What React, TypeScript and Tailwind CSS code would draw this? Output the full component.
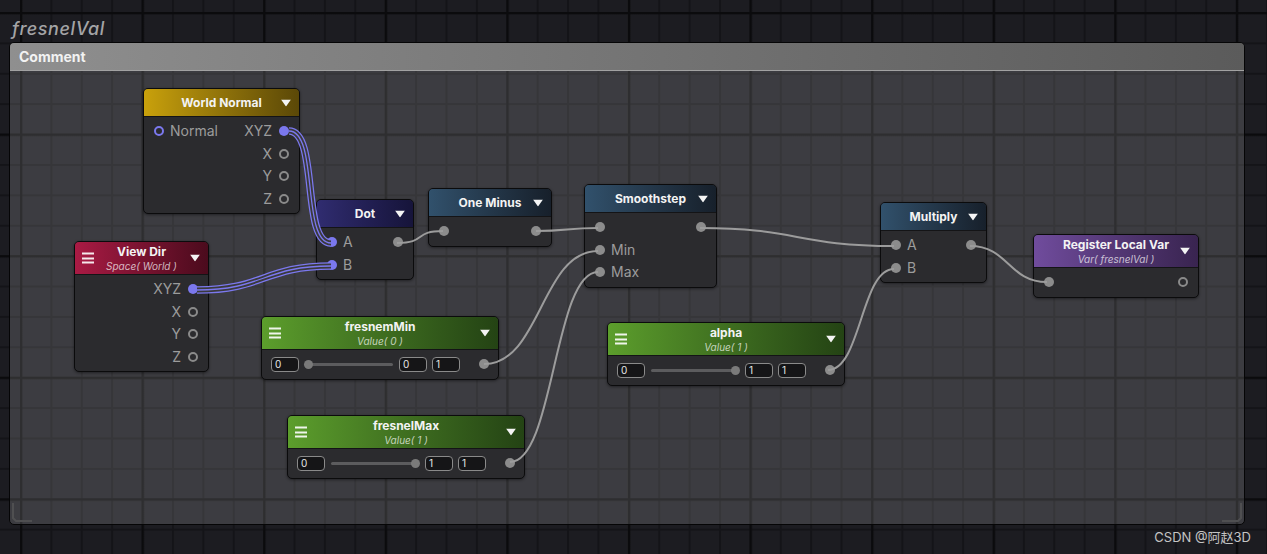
import type { ReactNode } from "react";

type PortKind = "grey" | "purple" | "greyRing" | "purpleRing";

const PURPLE = "#7b78ee";

function Port({ kind }: { kind: PortKind }) {
  if (kind === "purple") return <span className="block h-[10px] w-[10px] shrink-0 rounded-full bg-[#7b78ee]" />;
  if (kind === "purpleRing") return <span className="block h-[10px] w-[10px] shrink-0 rounded-full border-2 border-[#7b78ee]" />;
  if (kind === "greyRing") return <span className="block h-[10px] w-[10px] shrink-0 rounded-full border-2 border-[#8a8a8a]" />;
  return <span className="block h-[10px] w-[10px] shrink-0 rounded-full bg-[#8c8c8c]" />;
}

function Row({ left, leftLabel, rightLabel, right }: { left?: PortKind; leftLabel?: string; rightLabel?: string; right?: PortKind }) {
  return (
    <div className="flex h-[22.5px] items-center justify-between px-[10px] text-[14px] leading-none text-[#9c9c9c]">
      <div className="flex items-center gap-[6px]">
        {left ? <Port kind={left} /> : null}
        {leftLabel ? <span>{leftLabel}</span> : null}
      </div>
      <div className="flex items-center gap-[7px]">
        {rightLabel ? <span>{rightLabel}</span> : null}
        {right ? <Port kind={right} /> : null}
      </div>
    </div>
  );
}

function NumBox({ value }: { value: string }) {
  return (
    <div className="flex h-[15px] w-[28px] shrink-0 items-center rounded-[4px] border border-[#8a8a8a] bg-[#151517] pl-[3px] text-[10px] leading-none text-[#e6e6e6]">
      {value}
    </div>
  );
}

function ValueRow({ min, value, max, knobRight }: { min: string; value: string; max: string; knobRight?: boolean }) {
  return (
    <div className="flex h-[22.5px] items-center pl-[9px] pr-[9px]">
      <NumBox value={min} />
      <div className="relative mx-[6px] h-[3px] flex-1 rounded-full bg-[#5c5c5e]">
        <span className={`absolute top-[-3px] h-[9px] w-[9px] rounded-full bg-[#7a7a7a] ${knobRight ? "right-[-1px]" : "left-[-1px]"}`} />
      </div>
      <NumBox value={value} />
      <div className="w-[5px]" />
      <NumBox value={max} />
      <div className="ml-[19px]">
        <Port kind="grey" />
      </div>
    </div>
  );
}

function Hamburger() {
  return (
    <div className="absolute left-[7px] top-1/2 flex -translate-y-1/2 flex-col gap-[2.5px]">
      <span className="block h-[2px] w-[12px] bg-white/90" />
      <span className="block h-[2px] w-[12px] bg-white/90" />
      <span className="block h-[2px] w-[12px] bg-white/90" />
    </div>
  );
}

function Caret() {
  return (
    <svg className="absolute right-[8px] top-1/2 -translate-y-1/2" width="10" height="7" viewBox="0 0 10 7">
      <polygon points="0,0 10,0 5,7" fill="#f4f4f4" />
    </svg>
  );
}

function Node({
  pos,
  header,
  title,
  subtitle,
  menu,
  children,
}: {
  pos: string;
  header: string;
  title: string;
  subtitle?: string;
  menu?: boolean;
  children: ReactNode;
}) {
  return (
    <div className={`absolute overflow-hidden rounded-[5px] border border-[#0b0b0c] bg-[#2b2b2e] shadow-[0_1px_3px_rgba(0,0,0,0.45)] ${pos}`}>
      <div className={`relative flex flex-col items-center justify-center border-b border-[#141416] bg-linear-to-r ${subtitle ? "h-[33px]" : "h-[28px]"} ${header}`}>
        {menu ? <Hamburger /> : null}
        <span className="text-[12px] font-bold leading-[14px] text-[#f3f3f3]">{title}</span>
        {subtitle ? <span className="mt-[1px] text-[10px] italic leading-[12px] text-white/70">{subtitle}</span> : null}
        <Caret />
      </div>
      <div className="py-[3px]">{children}</div>
    </div>
  );
}

function curve(x1: number, y1: number, x2: number, y2: number) {
  const k = Math.max(Math.abs(x2 - x1) * 0.5, 30);
  return `M${x1} ${y1} C${x1 + k} ${y1} ${x2 - k} ${y2} ${x2} ${y2}`;
}

const greyWires: [number, number, number, number][] = [
  [397, 243, 443, 231],
  [536, 231, 598, 228],
  [484, 364, 598, 251],
  [510, 462, 598, 272],
  [700, 228, 894, 246],
  [828, 370, 894, 269],
  [970, 246, 1047, 282],
];

const purpleWires: [number, number, number, number][] = [
  [289, 131, 331, 243],
  [197, 290, 331, 266],
];

function Wires() {
  return (
    <svg className="pointer-events-none absolute left-0 top-0" width="1267" height="554" viewBox="0 0 1267 554">
      {greyWires.map(([a, b, c, d], i) => (
        <path key={i} d={curve(a, b, c, d)} fill="none" stroke="#9c9c9c" strokeWidth="2" />
      ))}
      {purpleWires.map(([a, b, c, d], i) => (
        <g key={i} fill="none">
          <path d={curve(a, b, c, d)} stroke={PURPLE} strokeWidth="7.5" />
          <path d={curve(a, b, c, d)} stroke="#3a3a3c" strokeWidth="5" />
          <path d={curve(a, b, c, d)} stroke={PURPLE} strokeWidth="1.3" />
        </g>
      ))}
    </svg>
  );
}

export default function App() {
  return (
    <div className="relative h-[554px] w-[1267px] overflow-hidden bg-[#1c1c21] bg-[image:linear-gradient(to_right,#0b0b0d_1.5px,transparent_3px),linear-gradient(to_bottom,#0b0b0d_1.5px,transparent_3px),linear-gradient(to_right,#141418_1.5px,transparent_2.5px),linear-gradient(to_bottom,#141418_1.5px,transparent_2.5px)] bg-[size:121.6px_121.6px,121.6px_121.6px,30.4px_30.4px,30.4px_30.4px] bg-[position:20px_12px] [font-family:Inter,'Noto_Sans',sans-serif]">
      <div className="absolute left-[12px] top-[18px] text-[18px] font-medium italic leading-[22px] tracking-[0.6px] text-[#a4a4a6]">fresnelVal</div>

      <div className="absolute left-[9px] top-[42px] flex h-[483px] w-[1236px] flex-col overflow-hidden rounded-[5px] border border-[#050506] bg-white/[0.145]">
        <div className="flex h-[28px] shrink-0 items-center border-b border-[#a2a2a2] bg-linear-to-r from-[#8f8f8f] to-[#5b5b5b] pl-[9px] text-[14px] font-bold text-[#f2f2f2]">
          Comment
        </div>
        <div className="relative flex-1">
          <svg className="absolute bottom-[1px] left-[1px]" width="22" height="22" viewBox="0 0 22 22">
            <path d="M2 2 V17 L5 20 H21" fill="none" stroke="#4f4f51" strokeWidth="2" />
          </svg>
          <svg className="absolute bottom-[1px] right-[1px]" width="22" height="22" viewBox="0 0 22 22">
            <path d="M20 2 V17 L17 20 H1" fill="none" stroke="#4f4f51" strokeWidth="2" />
          </svg>
        </div>
      </div>

      <Node pos="left-[143px] top-[88px] w-[157px]" header="from-[#c9a10b] to-[#5b4807]" title="World Normal">
        <Row left="purpleRing" leftLabel="Normal" rightLabel="XYZ" right="purple" />
        <Row rightLabel="X" right="greyRing" />
        <Row rightLabel="Y" right="greyRing" />
        <Row rightLabel="Z" right="greyRing" />
      </Node>

      <Node pos="left-[74px] top-[241px] w-[135px]" header="from-[#aa1a44] to-[#4b0b1d]" title="View Dir" subtitle="Space( World )" menu>
        <Row rightLabel="XYZ" right="purple" />
        <Row rightLabel="X" right="greyRing" />
        <Row rightLabel="Y" right="greyRing" />
        <Row rightLabel="Z" right="greyRing" />
      </Node>

      <Node pos="left-[316px] top-[199px] w-[98px]" header="from-[#302c70] to-[#16143a]" title="Dot">
        <Row left="purple" leftLabel="A" right="grey" />
        <Row left="purple" leftLabel="B" />
      </Node>

      <Node pos="left-[428px] top-[188px] w-[124px]" header="from-[#31516c] to-[#17202b]" title="One Minus">
        <Row left="grey" right="grey" />
      </Node>

      <Node pos="left-[584px] top-[184px] w-[133px]" header="from-[#31516c] to-[#17202b]" title="Smoothstep">
        <Row left="grey" right="grey" />
        <Row left="grey" leftLabel="Min" />
        <Row left="grey" leftLabel="Max" />
      </Node>

      <Node pos="left-[880px] top-[202px] w-[107px]" header="from-[#31516c] to-[#17202b]" title="Multiply">
        <Row left="grey" leftLabel="A" right="grey" />
        <Row left="grey" leftLabel="B" />
      </Node>

      <Node pos="left-[1033px] top-[234px] w-[166px]" header="from-[#704c9d] to-[#392450]" title="Register Local Var" subtitle="Var( fresnelVal )">
        <Row left="grey" right="greyRing" />
      </Node>

      <Node pos="left-[261px] top-[316px] w-[238px]" header="from-[#5c9e2c] to-[#244314]" title="fresnemMin" subtitle="Value( 0 )" menu>
        <ValueRow min="0" value="0" max="1" />
      </Node>

      <Node pos="left-[287px] top-[415px] w-[238px]" header="from-[#5c9e2c] to-[#244314]" title="fresnelMax" subtitle="Value( 1 )" menu>
        <ValueRow min="0" value="1" max="1" knobRight />
      </Node>

      <Node pos="left-[607px] top-[322px] w-[238px]" header="from-[#5c9e2c] to-[#244314]" title="alpha" subtitle="Value( 1 )" menu>
        <ValueRow min="0" value="1" max="1" knobRight />
      </Node>

      <Wires />

      <div className="absolute bottom-[9px] right-[16px] text-[13px] leading-[16px] text-[#c4c4c4] [font-family:Inter,'Noto_Sans_CJK_SC',sans-serif]">
        CSDN @阿赵3D
      </div>
    </div>
  );
}
